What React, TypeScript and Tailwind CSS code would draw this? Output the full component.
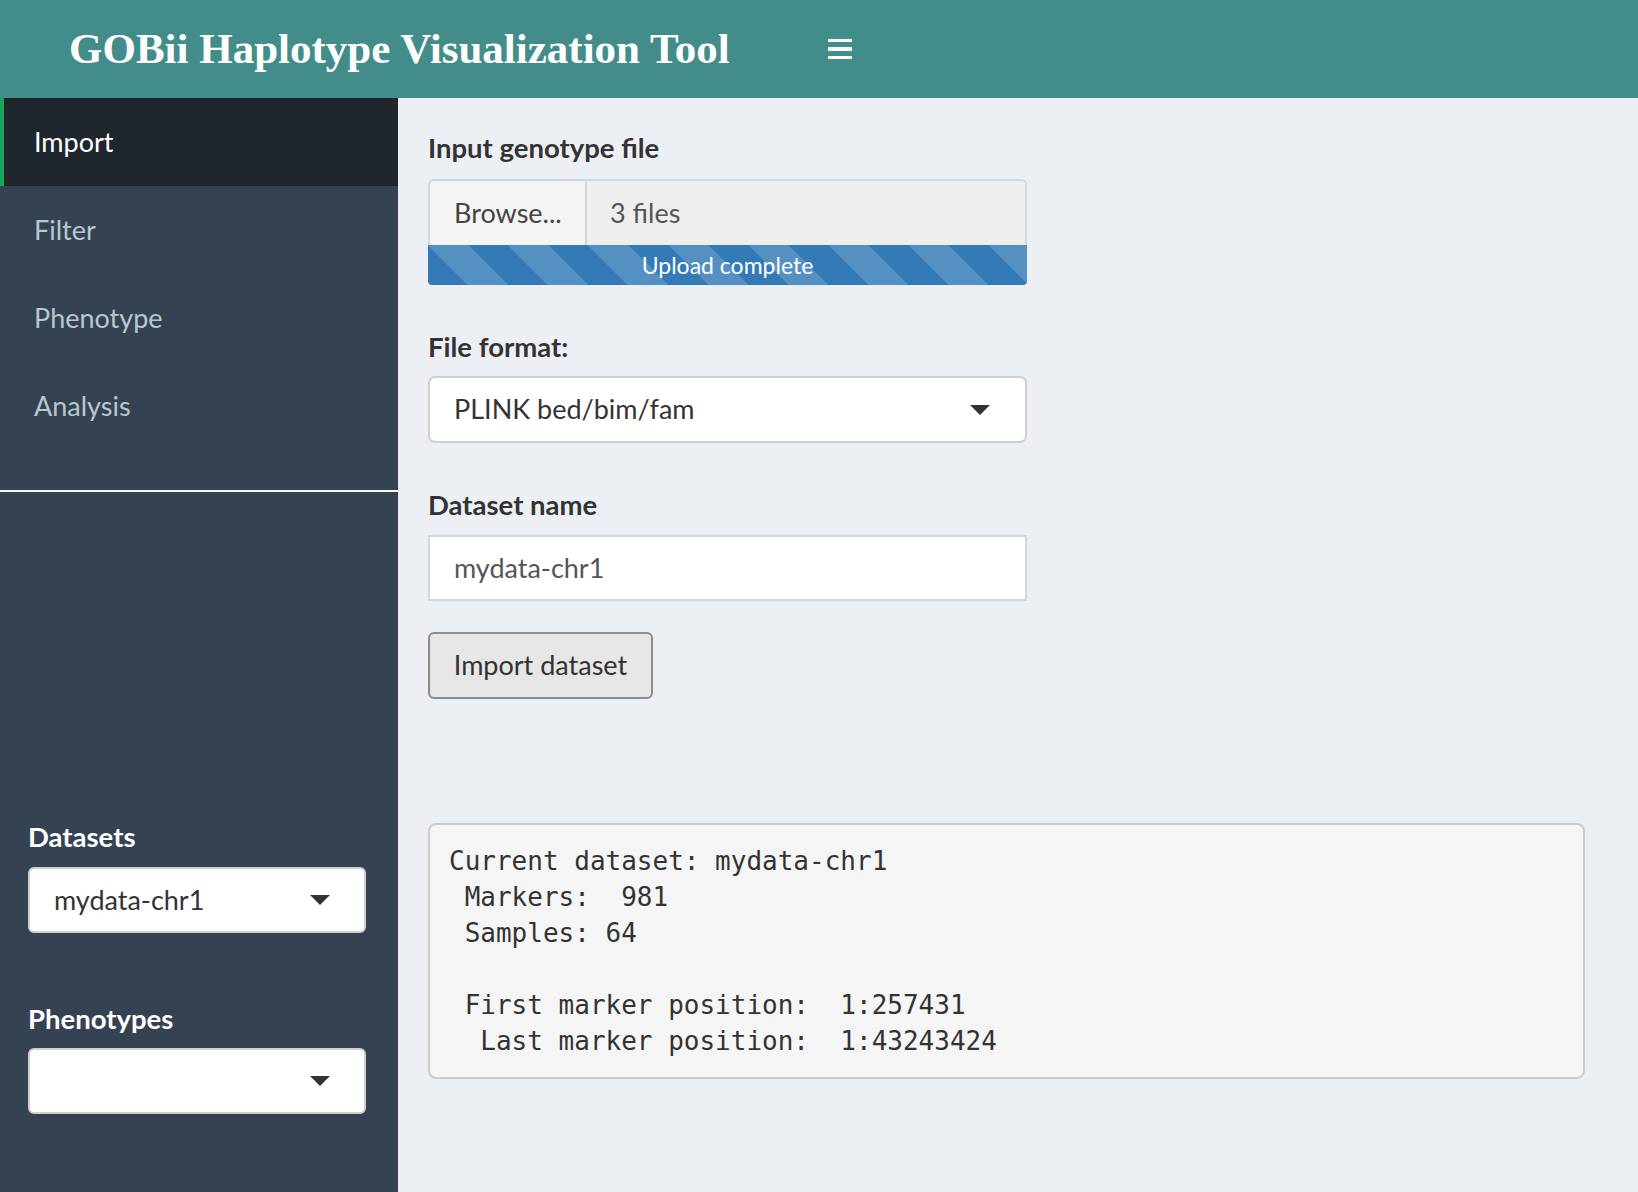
import React from "react";

const MENU = ["Import", "Filter", "Phenotype", "Analysis"] as const;

const Caret = () => (
  <svg width="20" height="10" viewBox="0 0 20 10" className="shrink-0">
    <polygon points="0,0 20,0 10,10" fill="#333" />
  </svg>
);

function SideSelect({ value }: { value?: string }) {
  return (
    <div className="flex h-[66px] w-[338px] items-center justify-between rounded-[6px] border-2 border-[#cfcfcf] bg-white pl-[24px] pr-[34px] text-[27px] text-[#333]">
      <span>{value}</span>
      <Caret />
    </div>
  );
}

export default function App() {
  return (
    <div className="flex h-[1192px] w-[1638px] flex-col overflow-hidden bg-[#ecf0f5] font-['Lato','Open_Sans',sans-serif]">
      {/* header */}
      <header className="flex h-[98px] shrink-0 items-center bg-[#428d8a]">
        <div className="w-[398px] shrink-0 pl-[69px]">
          <h1 className="whitespace-nowrap font-['Liberation_Serif','Times_New_Roman',serif] text-[43px] font-bold text-white">
            GOBii Haplotype Visualization Tool
          </h1>
        </div>
        <button className="ml-[430px] flex w-[24px] flex-col gap-[5px]">
          <span className="h-[3.5px] w-full bg-white" />
          <span className="h-[3.5px] w-full bg-white" />
          <span className="h-[3.5px] w-full bg-white" />
        </button>
      </header>

      <div className="flex flex-1">
        {/* sidebar */}
        <aside className="flex w-[398px] shrink-0 flex-col bg-[#344252]">
          <nav>
            {MENU.map((item, i) =>
              i === 0 ? (
                <div
                  key={item}
                  className="flex h-[88px] items-center border-l-4 border-[#1aa35a] bg-[#1f262d] pl-[30px] text-[27px] text-white"
                >
                  {item}
                </div>
              ) : (
                <div key={item} className="flex h-[88px] items-center pl-[34px] text-[27px] text-[#b8c7ce]">
                  {item}
                </div>
              )
            )}
          </nav>
          <div className="mt-[40px] h-[2px] bg-[#f4f4f4]" />

          <div className="mt-[326px] pl-[28px]">
            <div className="mb-[11px] h-[38px] text-[27.5px] leading-[38px] font-bold text-white">Datasets</div>
            <SideSelect value="mydata-chr1" />
            <div className="mb-[10px] mt-[67px] h-[38px] text-[27.5px] leading-[38px] font-bold text-white">Phenotypes</div>
            <SideSelect />
          </div>
        </aside>

        {/* main */}
        <main className="flex-1 pl-[30px] pt-[31px] text-[#333]">
          <div className="w-[599px]">
            <div className="mb-[12px] h-[38px] text-[27.5px] leading-[38px] font-bold">Input genotype file</div>
            <div className="flex h-[66px] overflow-hidden rounded-t-[6px] border-2 border-b-0 border-[#d2d6de] text-[27px]">
              <div className="flex w-[157px] shrink-0 items-center border-r-2 border-[#d2d6de] bg-[#f4f4f4] pl-[24px] text-[#444]">
                Browse...
              </div>
              <div className="flex flex-1 items-center bg-[#eeeeee] pl-[23px] text-[#555]">3 files</div>
            </div>
            <div className="flex h-[40px] items-center justify-center rounded-b-[4px] bg-[#337ab7] bg-[repeating-linear-gradient(45deg,transparent_0_28.28px,rgba(255,255,255,0.17)_28.28px_56.57px)] text-[23px] text-white">
              Upload complete
            </div>

            <div className="mb-[10px] mt-[43px] h-[38px] text-[27.5px] leading-[38px] font-bold">File format:</div>
            <div className="flex h-[67px] items-center justify-between rounded-[7px] border-2 border-[#cfcfcf] bg-white pl-[24px] pr-[35px] text-[27px]">
              <span>PLINK bed/bim/fam</span>
              <Caret />
            </div>

            <div className="mb-[11px] mt-[43px] h-[38px] text-[27.5px] leading-[38px] font-bold">Dataset name</div>
            <div className="flex h-[66px] items-center border-2 border-[#d2d6de] bg-white pl-[24px] text-[27px] text-[#555]">
              mydata-chr1
            </div>

            <button className="mt-[31px] flex h-[67px] w-[225px] items-center justify-center rounded-[6px] border-2 border-[#8c8c8c] bg-[#e6e6e6] text-[27px] text-[#333]">
              Import dataset
            </button>
          </div>

          <pre className="mt-[124px] h-[256px] w-[1157px] rounded-[8px] border-2 border-[#cccccc] bg-[#f5f5f5] px-[19px] pt-[18px] font-['DejaVu_Sans_Mono','Liberation_Mono',monospace] text-[26px] leading-[36px] text-[#333]">
{`Current dataset: mydata-chr1
 Markers:  981
 Samples: 64

 First marker position:  1:257431
  Last marker position:  1:43243424`}
          </pre>
        </main>
      </div>
    </div>
  );
}
